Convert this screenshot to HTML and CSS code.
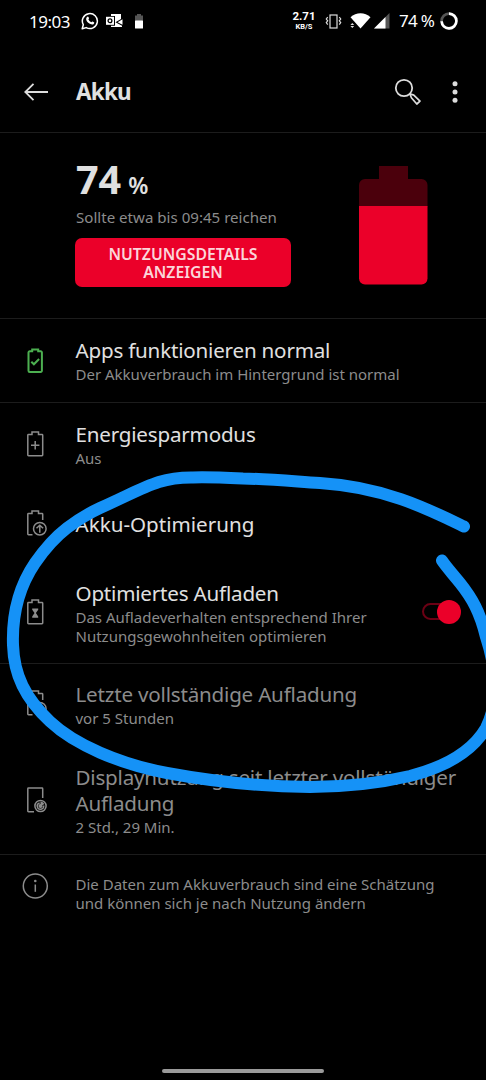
FILE: index.html
```html
<!DOCTYPE html>
<html lang="de">
<head>
    <meta charset="UTF-8">
    <meta name="viewport" content="width=device-width, initial-scale=1">
    <title>Akku</title>
    <link rel="stylesheet" href="styles.css">
</head>
<body>
    <div class="screen">
        <!-- Statusleiste -->
        <div class="statusbar">
            <span class="clock">19:03</span>
            <svg class="st-whatsapp" width="18" height="18" viewBox="0 0 18 18">
                <path d="M1.2 16.8l1.1-4.1a7.5 7.5 0 1 1 2.9 2.9z" fill="none" stroke="#fff" stroke-width="1.5" stroke-linejoin="round"/>
                <path d="M6.4 4.7c.5-.3.9-.1 1.1.4l.5 1.2c.1.3-.3.8-.6 1.2.7 1.3 1.7 2.2 3 2.8.4-.4.8-1 1.2-.8l1.4.7c.5.3.2 1.3-.3 1.8-1 .8-2.3.6-3.9-.3-1.6-.9-2.9-2.2-3.5-3.8-.4-1.3.2-2.6 1.1-3.2z" fill="#fff"/>
            </svg>
            <svg class="st-outlook" width="17" height="14" viewBox="0 0 17 14">
                <path d="M5 0h10v5L9.5 8.2 16 11.7V13H5v-1.2h4V2H5z" fill="#fff"/>
                <path d="M16.5 5.3v5.5L11.6 8.2z" fill="#fff"/>
                <rect x="0" y="2.8" width="8" height="8" fill="#fff"/>
                <circle cx="4" cy="6.8" r="1.9" fill="none" stroke="#000" stroke-width="1.3"/>
            </svg>
            <svg class="st-battery" width="8" height="15" viewBox="0 0 8 15">
                <path d="M2 0h4v1.5h2V7H0V1.5h2z" fill="#555"/>
                <rect x="0" y="6.5" width="8" height="8" rx=".6" fill="#fff"/>
            </svg>
            <div class="status-right">
                <div class="speed"><b>2.71</b><span>KB/S</span></div>
                <svg class="st-vibrate" width="17" height="15" viewBox="0 0 17 15">
                    <rect x="5" y="1" width="7" height="13" fill="none" stroke="#ddd" stroke-width="1.2"/>
                    <path d="M2.7 3.2L1.3 5l1.4 1.8L1.3 8.6l1.4 2M14.3 3.2L15.700 5l-1.400 1.800 1.400 1.800-1.400 2" fill="none" stroke="#ddd" stroke-width="1.2"/>
                </svg>
                <svg class="st-wifi" width="21" height="16" viewBox="0 0 21 16">
                    <path d="M.5 4.2C6-1.2 15-1.2 20.500 4.200L10.500 15.500z" fill="#fff"/>
                    <path d="M.4 12l1.900-2 1.900 2zM.4 13l1.900 2 1.900-2z" fill="#ddd"/>
                </svg>
                <svg class="st-signal" width="16" height="16" viewBox="0 0 16 16">
                    <path d="M0 15.500L15.500 0v15.500z" fill="#555"/>
                    <path d="M0 15.500L11.500 4v11.500z" fill="#fff"/>
                </svg>
                <span class="percent">74 %</span>
                <svg class="st-ring" width="18" height="18" viewBox="0 0 18 18">
                    <circle cx="9" cy="9" r="7.4" fill="none" stroke="#555" stroke-width="2.6"/>
                    <circle cx="9" cy="9" r="7.4" fill="none" stroke="#fff" stroke-width="2.6" stroke-dasharray="34.4 46.5" transform="rotate(-90 9 9)"/>
                </svg>
            </div>
        </div>

        <!-- Titelleiste -->
        <div class="appbar">
            <svg class="back" width="25" height="18" viewBox="0 0 25 18">
                <path d="M24 9H1.500M9.500 .8L1.300 9l8.200 8.200" fill="none" stroke="#dcdcdc" stroke-width="1.8"/>
            </svg>
            <h1>Akku</h1>
            <svg class="search" width="28" height="28" viewBox="0 0 28 28">
                <circle cx="10" cy="10" r="8.2" fill="none" stroke="#dcdcdc" stroke-width="1.8"/>
                <path d="M15.800 15.800l1.600 4 5.400 6.200 3.200-2.900-6.200-6z" fill="none" stroke="#dcdcdc" stroke-width="1.7" stroke-linejoin="round"/>
            </svg>
            <svg class="more" width="6" height="22" viewBox="0 0 6 22">
                <circle cx="3" cy="2.7" r="2.5" fill="#dcdcdc"/>
                <circle cx="3" cy="11" r="2.5" fill="#dcdcdc"/>
                <circle cx="3" cy="19.3" r="2.5" fill="#dcdcdc"/>
            </svg>
        </div>

        <!-- Akkustand -->
        <div class="hero">
            <div class="hero-info">
                <div class="level"><span>74</span><small>%</small></div>
                <div class="estimate">Sollte etwa bis 09:45 reichen</div>
                <button class="details">NUTZUNGSDETAILS<br>ANZEIGEN</button>
            </div>
            <svg class="hero-battery" width="69" height="119" viewBox="0 0 69 119">
                <path d="M20 0h29v13h13.500a6 6 0 0 1 6 6v22H0V19a6 6 0 0 1 6-6h14z" fill="#4b000c"/>
                <path d="M0 40h68.500v72.500a6 6 0 0 1-6 6H6a6 6 0 0 1-6-6z" fill="#eb0029"/>
            </svg>
        </div>

        <div class="row row-apps">
            <svg class="icon green" width="22" height="28" viewBox="0 0 22 28">
                <path d="M5.700 4.300h2.500V2.500h6v1.800h2.500a1.200 1.200 0 0 1 1.200 1.200v18.300a1.200 1.200 0 0 1-1.200 1.200h-11a1.200 1.200 0 0 1-1.200-1.200V5.500a1.200 1.200 0 0 1 1.200-1.200z"/>
                <path d="M7.300 14.700l2.600 2.600 5.200-5.300"/>
            </svg>
            <div class="text">
                <div class="title">Apps funktionieren normal</div>
                <div class="sub">Der Akkuverbrauch im Hintergrund ist normal</div>
            </div>
        </div>

        <div class="row row-saver">
            <svg class="icon" width="22" height="28" viewBox="0 0 22 28">
                <path d="M4.500 4.500H8V2h6.500v2.500H18a.7.700 0 0 1 .7.700v19.800a.7.700 0 0 1-.7.700H4.500a.7.700 0 0 1-.7-.7V5.200a.7.700 0 0 1 .7-.7z"/>
                <path d="M11.200 11v8.400M7 15.200h8.400"/>
            </svg>
            <div class="text">
                <div class="title">Energiesparmodus</div>
                <div class="sub">Aus</div>
            </div>
        </div>

        <div class="row row-optimize">
            <svg class="icon wide" width="26" height="28" viewBox="0 0 26 28">
                <path d="M8.500 25.800h-4a.7.700 0 0 1-.7-.7V5.200a.7.700 0 0 1 .7-.7H8V2h6.500v2.500H18a.7.700 0 0 1 .7.700V11"/>
                <circle cx="15.800" cy="19.700" r="6.300"/>
                <path d="M15.800 23.800v-7.300M12.500 19.300l3.300-3.100 3.300 3.100"/>
            </svg>
            <div class="text">
                <div class="title">Akku-Optimierung</div>
            </div>
        </div>

        <div class="row row-charging">
            <svg class="icon" width="22" height="28" viewBox="0 0 22 28">
                <path d="M4.500 4.500H8V2h6.500v2.500H18a.7.700 0 0 1 .7.700v19.800a.7.700 0 0 1-.7.700H4.500a.7.700 0 0 1-.7-.7V5.200a.7.700 0 0 1 .7-.7z"/>
                <path class="solid" d="M8.200 10.500h6v1.200l-2.300 3.400 2.300 3.400v1.200h-6v-1.200l2.300-3.400-2.300-3.400z"/>
            </svg>
            <div class="text">
                <div class="title">Optimiertes Aufladen</div>
                <div class="sub">Das Aufladeverhalten entsprechend Ihrer<br>Nutzungsgewohnheiten optimieren</div>
            </div>
            <div class="toggle"><span class="knob"></span></div>
        </div>

        <div class="row row-last muted">
            <svg class="icon wide" width="26" height="28" viewBox="0 0 26 28">
                <path d="M8.500 25.800h-4a.7.700 0 0 1-.7-.7V5.200a.7.700 0 0 1 .7-.7H8V2h6.500v2.500H18a.7.700 0 0 1 .7.700V11"/>
                <circle cx="15.800" cy="19.700" r="6.300"/>
                <path d="M15.800 15.800v4h3"/>
            </svg>
            <div class="text">
                <div class="title">Letzte vollständige Aufladung</div>
                <div class="sub">vor 5 Stunden</div>
            </div>
        </div>

        <div class="row row-display muted">
            <svg class="icon wide" width="26" height="28" viewBox="0 0 26 28">
                <path d="M10 25.800H4.500a.7.700 0 0 1-.7-.7V2.700a.7.700 0 0 1 .7-.7H18a.7.700 0 0 1 .7.700V12"/>
                <circle cx="16.500" cy="20" r="5.600"/>
                <path class="solid" d="M16.500 15.500a4.500 4.500 0 0 1 4 2.500l-2.200 1.200a2 2 0 1 1-1.800-1.200z"/>
                <path d="M19.600 19.500a3.200 3.200 0 1 1-4-2.500"/>
            </svg>
            <div class="text">
                <div class="title">Displaynutzung seit letzter vollständiger<br>Aufladung</div>
                <div class="sub">2 Std., 29 Min.</div>
            </div>
        </div>

        <div class="row row-info muted">
            <svg class="icon info" width="28" height="28" viewBox="0 0 28 28">
                <circle cx="14.300" cy="14" r="12"/>
                <path d="M14.300 12.500v7.300"/>
                <circle class="solid" cx="14.300" cy="9" r="1.300"/>
            </svg>
            <div class="text">
                <div class="sub">Die Daten zum Akkuverbrauch sind eine Schätzung<br>und können sich je nach Nutzung ändern</div>
            </div>
        </div>

        <div class="homebar"></div>

        <!-- Freihand-Markierung -->
        <svg class="marker" width="486" height="1080" viewBox="0 0 486 1080">
            <path d="M464 526.500C430 510 385 487 320 483C290 481 270 479 243 478.500C220 477.500 205 477 193 477.500C158 477 145 488 100 508C87 514 79 519 67 528C54 538 44 550 35 563C18 588 12 615 13 645C14 675 25 698 50 721.500C75 745 120 764 167 773C210 781 265 786.500 310 787C350 787 380 783 410 776C445 767 472 752 486 728C500 700 495 665 486 637C480 612 472 598 460 583C453 574 447 568 442 560.500"/>
        </svg>
    </div>
</body>
</html>
```
FILE: styles.css
```css
* {
    box-sizing: border-box;
}
body {
    margin: 0;
    background: #000;
    color: #e0e0e0;
    font-family: "Noto Sans", sans-serif;
}
.screen {
    position: relative;
    display: flex;
    flex-direction: column;
    width: 486px;
    height: 1080px;
    overflow: hidden;
}
svg {
    display: block;
    flex: none;
}

/* Statusleiste */
.statusbar {
    display: flex;
    align-items: center;
    height: 42px;
    padding: 0 28px 0 29px;
    color: #fff;
    white-space: nowrap;
}
.clock {
    width: 52px;
    font-size: 17px;
    letter-spacing: -0.5px;
}
.st-outlook {
    margin-left: 7px;
}
.st-battery {
    margin-left: 12px;
}
.status-right {
    display: flex;
    align-items: center;
    margin-left: auto;
}
.speed {
    display: flex;
    flex-direction: column;
    align-items: center;
    width: 22px;
    font-family: Roboto, sans-serif;
    font-size: 11.5px;
    line-height: 11px;
}
.speed span {
    font-size: 7.5px;
    font-weight: 700;
    line-height: 9px;
}
.st-vibrate {
    margin-left: 10px;
}
.st-wifi {
    margin-left: 8px;
}
.st-signal {
    margin-left: 3px;
}
.percent {
    width: 36px;
    margin: 0 5px 2px 9px;
    font-size: 17px;
    letter-spacing: -0.7px;
}
.st-ring {
    margin-bottom: 1px;
}

/* Titelleiste */
.appbar {
    display: flex;
    align-items: center;
    height: 91px;
    padding: 10px 28px 1px 24px;
    border-bottom: 1px solid #1c1c1c;
}
.appbar h1 {
    margin: 0 0 0 27px;
    font-size: 22.5px;
    letter-spacing: -0.8px;
    line-height: 30px;
}
.search {
    margin-left: auto;
}
.more {
    margin-left: 30px;
}

/* Akkustand */
.hero {
    display: flex;
    justify-content: space-between;
    height: 186px;
    padding: 33px 58px 0 75px;
    border-bottom: 1px solid #1c1c1c;
}
.level {
    display: flex;
    align-items: baseline;
    gap: 7px;
    height: 40px;
    padding-left: 1px;
    font-size: 39.5px;
    font-weight: 700;
    line-height: 27px;
}
.level small {
    font-size: 23px;
    font-weight: 600;
}
.estimate {
    height: 32px;
    padding-left: 1px;
    color: #8c8c8c;
    font-size: 15.1px;
    line-height: 22px;
}
.details {
    display: block;
    width: 216px;
    height: 49px;
    padding: 0;
    border: none;
    border-radius: 7px;
    background: #eb0029;
    color: #fbd5da;
    font: 600 15.8px/18px "Noto Sans", sans-serif;
}

/* Einträge */
.row {
    display: flex;
    align-items: center;
    padding: 0 26px 0 24px;
}
.icon {
    fill: none;
    stroke: #8c8c8c;
    stroke-width: 1.5;
}
.icon .solid {
    fill: #8c8c8c;
    stroke: none;
}
.icon.green {
    stroke: #4caf50;
    stroke-width: 2;
}
.icon.info {
    margin: 0 0 16px -3px;
}
.text {
    flex: 1;
    margin-left: 29.5px;
    white-space: nowrap;
}
.wide + .text {
    margin-left: 25.5px;
}
.info + .text {
    margin-left: 26.5px;
}
.title {
    font-size: 20.6px;
    letter-spacing: -0.2px;
    line-height: 26px;
}
.sub {
    color: #8c8c8c;
    font-size: 15px;
    line-height: 19px;
}
.title + .sub {
    margin-top: 2px;
}
.muted .title {
    color: #8c8c8c;
}
.row-apps {
    height: 84px;
    border-bottom: 1px solid #1c1c1c;
}
.row-saver {
    height: 82px;
}
.row-optimize {
    height: 78px;
}
.row-optimize .title {
    letter-spacing: 0;
}
.row-optimize .icon,
.row-last .icon {
    margin-bottom: 3px;
}
.row-charging {
    height: 101px;
    padding-bottom: 1px;
    border-bottom: 1px solid #1c1c1c;
}
.row-charging .icon,
.row-charging .toggle {
    margin-bottom: 2px;
}
.row-last {
    height: 82px;
    padding-bottom: 1px;
}
.row-display {
    height: 109px;
    border-bottom: 1px solid #1c1c1c;
}
.row-info {
    height: 78px;
}

/* Schalter */
.toggle {
    display: flex;
    align-items: center;
    justify-content: flex-end;
    width: 38px;
    height: 17px;
    border: 2px solid #6b0014;
    border-radius: 9px;
}
.knob {
    flex: none;
    width: 24px;
    height: 24px;
    margin-right: -3px;
    border-radius: 50%;
    background: #eb0029;
}

.homebar {
    width: 162px;
    height: 4px;
    margin: auto auto 7px;
    border-radius: 2px;
    background: #9a9a9a;
}

/* liegt über der ganzen Liste */
.marker {
    position: absolute;
    top: 0;
    left: 0;
    fill: none;
    stroke: #1592f7;
    stroke-width: 12;
    stroke-linecap: round;
    stroke-linejoin: round;
}
```
